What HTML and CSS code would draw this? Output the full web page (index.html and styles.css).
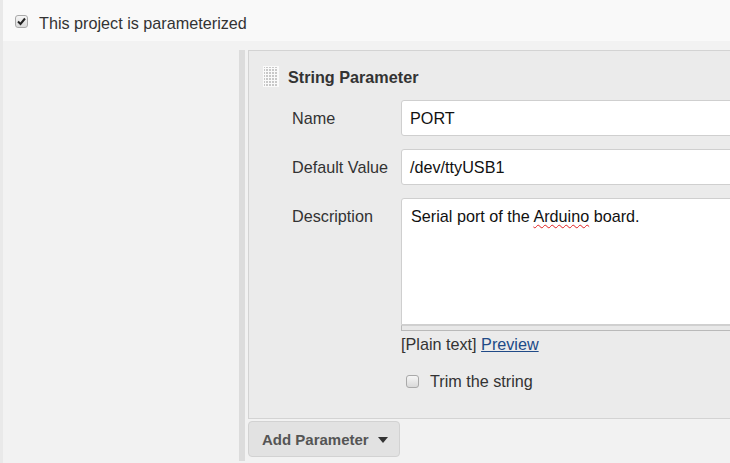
FILE: index.html
```html
<!DOCTYPE html>
<html>
<head>
<meta charset="utf-8">
<link rel="stylesheet" href="styles.css">
</head>
<body>
<div class="page">
  <div class="top">
    <span class="cb checked"><svg viewBox="0 0 13 13" width="13" height="13"><path d="M3 6.5 L5.5 9 L10 3.5" fill="none" stroke="#222" stroke-width="2"/></svg></span>
    <span class="top-label">This project is parameterized</span>
  </div>
  <div class="main">
    <div class="spacer"></div>
    <div class="bar"></div>
    <div class="content">
      <div class="panel">
        <div class="head">
          <svg class="handle" width="16" height="21" viewBox="0 0 16 21">
            <defs>
              <pattern id="dots" width="3" height="3" patternUnits="userSpaceOnUse">
                <rect x="0" y="0" width="2" height="2" fill="#c8c8c8"/>
              </pattern>
            </defs>
            <rect width="16" height="21" fill="#fafafa"/>
            <rect x="1" y="1" width="14" height="20" fill="url(#dots)"/>
          </svg>
          <span class="title">String Parameter</span>
        </div>
        <div class="row">
          <label class="lbl">Name</label>
          <div class="field"><div class="input">PORT</div></div>
        </div>
        <div class="row">
          <label class="lbl">Default Value</label>
          <div class="field"><div class="input">/dev/ttyUSB1</div></div>
        </div>
        <div class="row">
          <label class="lbl">Description</label>
          <div class="field">
            <div class="textarea">Serial port of the <span class="spell">Arduino</span> board.</div>
            <div class="grip"></div>
            <div class="fmt">[Plain text] <a class="link">Preview</a></div>
            <div class="trim"><span class="cb"></span><span>Trim the string</span></div>
          </div>
        </div>
      </div>
      <div class="btn">Add Parameter <span class="caret"></span></div>
    </div>
  </div>
</div>
</body>
</html>
```
FILE: styles.css
```css
html, body {
  margin: 0;
  padding: 0;
}
body {
  width: 730px;
  height: 463px;
  overflow: hidden;
  background: #f2f2f2;
  font-family: "Liberation Sans", Arial, sans-serif;
  font-size: 16.2px;
  color: #333;
}
.page {
  border-left: 3px solid #e9e9e9;
  height: 463px;
  box-sizing: border-box;
}
.top {
  height: 41px;
  background: #f9f9f9;
  display: flex;
  align-items: center;
  padding-left: 12px;
  box-sizing: border-box;
  padding-top: 2px;
}
.top-label {
  margin-left: 11px;
  color: #333;
  padding-top: 3px;
}
.cb {
  display: inline-block;
  width: 13px;
  height: 13px;
  box-sizing: border-box;
  border: 1px solid #a9a9a9;
  border-radius: 3px;
  background: linear-gradient(#f6f6f6, #d9d9d9);
  flex: none;
}
.cb svg {
  display: block;
  margin: -1px 0 0 -1px;
}
.main {
  display: flex;
  padding-top: 9px;
}
.spacer {
  width: 236px;
  flex: none;
}
.bar {
  width: 6px;
  height: 411px;
  background: #dcdcdc;
  flex: none;
}
.content {
  margin-left: 3px;
  width: 560px;
  flex: none;
}
.panel {
  background: #ebebeb;
  border: 1px solid #d3d3d3;
  height: 369px;
  box-sizing: border-box;
}
.head {
  display: flex;
  align-items: center;
  padding: 15px 0 0 14px;
  height: 21px;
  overflow: hidden;
}
.handle {
  display: block;
  flex: none;
}
.title {
  font-weight: bold;
  margin-left: 9px;
  color: #333;
  line-height: 20px;
  padding-top: 1px;
}
.row {
  display: flex;
  align-items: flex-start;
  margin-top: 13px;
}
.lbl {
  width: 109px;
  padding-left: 43px;
  padding-top: 1px;
  height: 35px;
  line-height: 35px;
  flex: none;
  color: #333;
}
.field {
  flex: none;
  width: 400px;
}
.input {
  height: 36px;
  box-sizing: border-box;
  background: #fff;
  border: 1px solid #cfcfcf;
  border-radius: 3px;
  padding-left: 8px;
  line-height: 35px;
  color: #111;
}
.textarea {
  height: 127px;
  box-sizing: border-box;
  background: #fff;
  border: 1px solid #cfcfcf;
  border-radius: 3px 3px 0 0;
  padding: 7px 9px;
  line-height: 21px;
  color: #111;
}
.spell {
  text-decoration: underline wavy #e02020;
  text-decoration-thickness: 1px;
  text-underline-offset: 2px;
}
.grip {
  height: 6px;
  box-sizing: border-box;
  background: #e8e8e8;
  border: 1px solid #b9b9b9;
  border-top: 1px solid #d0d0d0;
}
.fmt {
  margin-top: 3px;
  line-height: 20px;
  color: #333;
}
.link {
  color: #204a87;
  text-decoration: underline;
}
.trim {
  display: flex;
  align-items: center;
  margin-top: 18px;
  padding-left: 5px;
}
.trim span:last-child {
  margin-left: 11px;
}
.btn {
  margin-top: 2px;
  width: 152px;
  height: 36px;
  box-sizing: border-box;
  background: #e2e2e2;
  border: 1px solid #d2d2d2;
  border-radius: 4px;
  font-weight: bold;
  font-size: 15px;
  color: #555;
  display: flex;
  align-items: center;
  padding-left: 13px;
  padding-top: 1px;
}
.caret {
  width: 0;
  height: 0;
  border-left: 5px solid transparent;
  border-right: 5px solid transparent;
  border-top: 6px solid #333;
  margin-left: 9px;
}
```
